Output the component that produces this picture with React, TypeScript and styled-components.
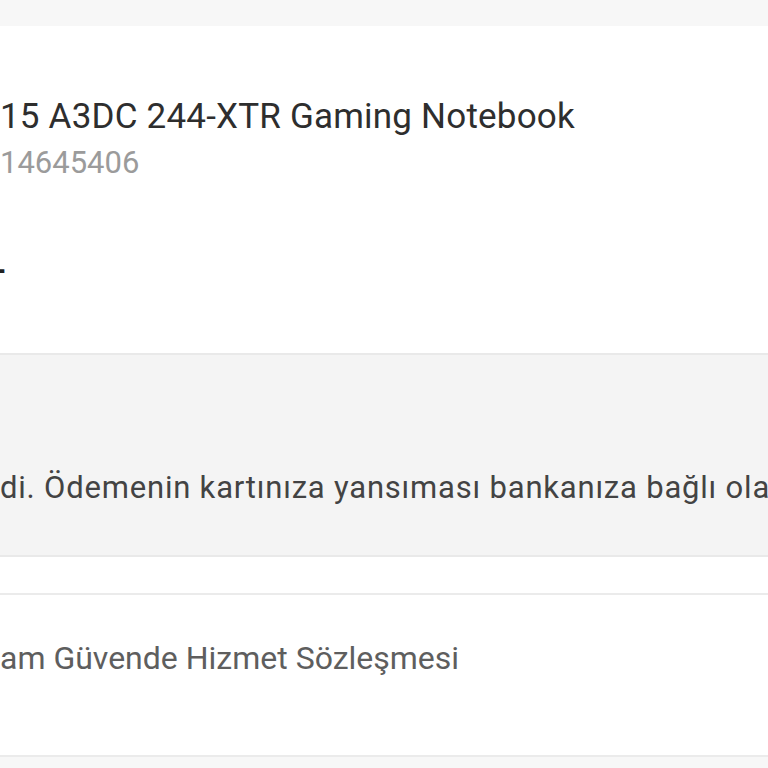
import styled, { createGlobalStyle } from "styled-components";

const GlobalStyle = createGlobalStyle`
  html, body {
    margin: 0;
    padding: 0;
    background-color: #f7f7f7;
    font-family: Roboto, "Noto Sans", "Liberation Sans", sans-serif;
    overflow: hidden;
  }
`;

const Page = styled.div`
  width: 768px;
  height: 768px;
  overflow: hidden;
  display: flex;
  flex-direction: column;
  padding-top: 26px;
  box-sizing: border-box;
`;

const OrderCard = styled.section`
  background-color: #fff;
  display: flex;
  flex-direction: column;
`;

const ProductInfo = styled.div`
  height: 327px;
  padding-top: 69px;
  box-sizing: border-box;
  display: flex;
  flex-direction: column;
  white-space: nowrap;
  overflow: hidden;
`;

const ProductTitle = styled.h1`
  margin: 0;
  font-size: 35px;
  font-weight: 400;
  line-height: 44px;
  color: #2e2e2e;
  letter-spacing: 0.2px;
`;

const ProductCode = styled.div`
  margin-top: 4px;
  font-size: 31px;
  line-height: 40px;
  color: #9b9b9b;
`;

const Price = styled.div`
  margin-top: 66px;
  margin-left: -7px;
  font-size: 34px;
  line-height: 40px;
  color: #222;
  font-weight: 700;
`;

const Notice = styled.div`
  height: 204px;
  box-sizing: border-box;
  border-top: 2px solid #e9e9e9;
  border-bottom: 2px solid #e9e9e9;
  background-color: #f4f4f4;
  display: flex;
  align-items: center;
  padding-top: 64px;
  white-space: nowrap;
  overflow: hidden;
`;

const NoticeText = styled.p`
  margin: 0;
  font-size: 31px;
  color: #434343;
  letter-spacing: 0.8px;
`;

const Spacer = styled.div`
  height: 36px;
  background-color: #fff;
`;

const ContractCard = styled.section`
  height: 164px;
  box-sizing: border-box;
  background-color: #fff;
  border-top: 2px solid #ebebeb;
  border-bottom: 2px solid #ebebeb;
  display: flex;
  align-items: flex-start;
  padding-top: 43px;
  white-space: nowrap;
`;

const ContractLink = styled.span`
  font-size: 32px;
  line-height: 40px;
  color: #5e5e5e;
  letter-spacing: 0;
`;

export default function App() {
  return (
    <>
      <GlobalStyle />
      <Page>
        <OrderCard>
          <ProductInfo>
            <ProductTitle>15 A3DC 244-XTR Gaming Notebook</ProductTitle>
            <ProductCode>14645406</ProductCode>
            <Price>-</Price>
          </ProductInfo>
          <Notice>
            <NoticeText>
              di. Ödemenin kartınıza yansıması bankanıza bağlı olarak değişebilir.
            </NoticeText>
          </Notice>
        </OrderCard>
        <Spacer />
        <ContractCard>
          <ContractLink>am Güvende Hizmet Sözleşmesi</ContractLink>
        </ContractCard>
      </Page>
    </>
  );
}
